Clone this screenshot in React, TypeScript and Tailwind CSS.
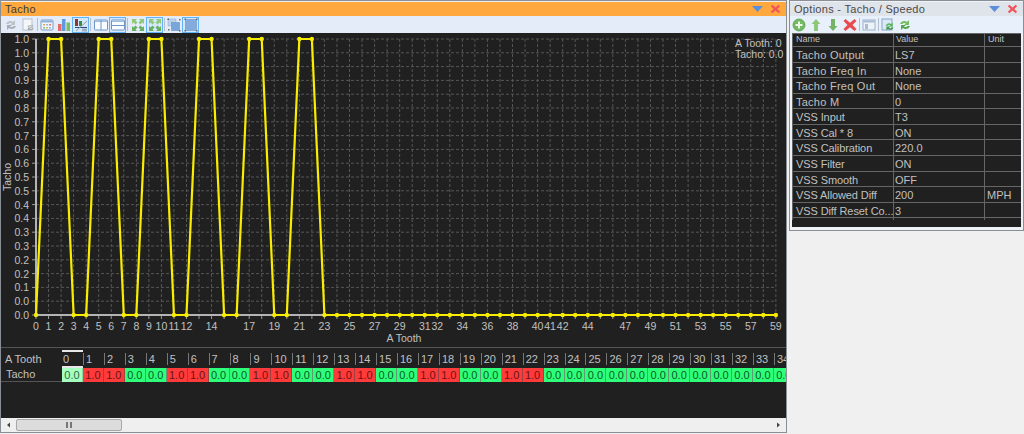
const FONT = "font-['Liberation_Sans',Arial,sans-serif]";

const values = Array.from({ length: 60 }, (_, i) => (i < 23 && [1, 2].includes(i % 4) ? 1 : 0));
const xLabels = [
  0, 1, 2, 3, 4, 5, 6, 7, 8, 9, 10, 11, 12, 14, 17, 19, 21, 23, 25, 27, 29, 31, 32, 34, 36, 38, 40, 41, 42, 44, 47, 49,
  51, 53, 55, 57, 59,
];
const yLabels = [
  "1.0", "1.0", "0.9", "0.9", "0.8", "0.8", "0.7", "0.7", "0.6", "0.6", "0.5", "0.5", "0.4", "0.4", "0.3", "0.3",
  "0.2", "0.2", "0.1", "0.0", "0.0",
];
const options = [
  ["Tacho Output", "LS7", ""],
  ["Tacho Freq In", "None", ""],
  ["Tacho Freq Out", "None", ""],
  ["Tacho M", "0", ""],
  ["VSS Input", "T3", ""],
  ["VSS Cal * 8", "ON", ""],
  ["VSS Calibration", "220.0", ""],
  ["VSS Filter", "ON", ""],
  ["VSS Smooth", "OFF", ""],
  ["VSS Allowed Diff", "200", "MPH"],
  ["VSS Diff Reset Co...", "3", ""],
];

const px = (i: number) => 36 + i * 12.54;
const py = (v: number) => 315 - v * 276;

function Chart() {
  const line = values.map((v, i) => `${px(i)},${py(v)}`).join(" ");
  return (
    <svg width="783" height="314" viewBox="1 33 783 314" className="block shrink-0">
      {yLabels.map((label, i) => {
        const y = 39 + i * 13.8;
        return (
          <g key={i}>
            <line x1="36" x2="776" y1={y} y2={y} stroke="#565656" strokeDasharray="3 2" />
            <line x1="32" x2="36" y1={y} y2={y} stroke="#9a9a9a" />
            <text x="29" y={y + 4} textAnchor="end" fontSize="10.5" fill="#c0c0c0">
              {label}
            </text>
          </g>
        );
      })}
      {values.map((_, i) => (
        <g key={i}>
          <line x1={px(i)} x2={px(i)} y1="39" y2="315" stroke="#565656" strokeDasharray="3 2" />
          <line x1={px(i)} x2={px(i)} y1="315" y2="319" stroke="#9a9a9a" />
        </g>
      ))}
      <line x1="36" x2="36" y1="39" y2="316" stroke="#b4b4b4" strokeWidth="2" />
      <line x1="35" x2="777" y1="315" y2="315" stroke="#b4b4b4" strokeWidth="2" />
      <polyline points={line} fill="none" stroke="#f8ec00" strokeWidth="2.2" />
      {values.map((v, i) => (
        <circle key={i} cx={px(i)} cy={py(v)} r="2.2" fill="#f8ec00" />
      ))}
      {xLabels.map((n) => (
        <text key={n} x={px(n)} y="330" textAnchor="middle" fontSize="10.5" fill="#c0c0c0">
          {n}
        </text>
      ))}
      <text x="404" y="342" textAnchor="middle" fontSize="10.5" fill="#c0c0c0">
        A Tooth
      </text>
      <text x="11" y="177" textAnchor="middle" fontSize="10.5" fill="#c0c0c0" transform="rotate(-90 11 177)">
        Tacho
      </text>
      <text x="735" y="47" fontSize="10.5" fill="#c0c0c0">
        A Tooth: 0
      </text>
      <text x="735" y="58" fontSize="10.5" fill="#c0c0c0">
        Tacho: 0.0
      </text>
    </svg>
  );
}

function ToolButton({ selected, children }: { selected?: boolean; children: React.ReactNode }) {
  return (
    <div
      className={
        selected
          ? "flex h-[16px] w-[17px] shrink-0 items-center justify-center border border-[#62b4f5] bg-[#d4e7fb]"
          : "flex h-[16px] w-[17px] shrink-0 items-center justify-center"
      }
    >
      <svg width="14" height="14" viewBox="0 0 14 14">
        {children}
      </svg>
    </div>
  );
}

function Sep({ wide }: { wide?: boolean }) {
  return (
    <div className={wide ? "mx-[1px] h-[13px] w-[1px] shrink-0 bg-[#b4bfce]" : "ml-[1px] h-[13px] w-[1px] shrink-0 bg-[#b4bfce]"} />
  );
}

const RecycleArrows = ({ c1, c2 }: { c1: string; c2: string }) => (
  <>
    <path d="M2 6 C3 3 7 2 9 4 L11 2 V7 H6 L8 5.5 C7 4.5 5 4.8 4.5 6 Z" fill={c1} />
    <path d="M12 8 C11 11 7 12 5 10 L3 12 V7 H8 L6 8.5 C7 9.5 9 9.2 9.5 8 Z" fill={c2} />
  </>
);

const FourArrows = () => (
  <>
    <path d="M1 1 H6 L4.5 2.5 L6.5 4.5 L4.5 6.5 L2.5 4.5 L1 6 Z" fill="#8fca7c" />
    <path d="M13 1 V6 L11.5 4.5 L9.5 6.5 L7.5 4.5 L9.5 2.5 L8 1 Z" fill="#8fca7c" />
    <path d="M1 13 V8 L2.5 9.5 L4.5 7.5 L6.5 9.5 L4.5 11.5 L6 13 Z" fill="#68ae62" />
    <path d="M13 13 H8 L9.5 11.5 L7.5 9.5 L9.5 7.5 L11.5 9.5 L13 8 Z" fill="#68ae62" />
  </>
);

function MainToolbar() {
  return (
    <div className="flex h-[17px] shrink-0 items-center bg-[#e4ecfa] pl-[1px]">
      <ToolButton>
        <RecycleArrows c1="#bcc2c8" c2="#a8aeb4" />
      </ToolButton>
      <ToolButton>
        <rect x="2" y="1" width="9" height="11" fill="#f4f6f8" stroke="#bcc2c8" />
        <g transform="translate(5 5) scale(0.65)">
          <RecycleArrows c1="#b4bac0" c2="#a0a6ac" />
        </g>
      </ToolButton>
      <Sep />
      <ToolButton>
        <rect x="1" y="2" width="12" height="10" rx="1" fill="#f2f6fb" stroke="#7b9cc4" />
        <rect x="1.5" y="2.5" width="11" height="2" fill="#8fb2dc" />
        <path d="M3 6h2v1.5H3z" fill="#e8a24a" />
        <path d="M6 6h2v1.5H6z" fill="#8cb8e4" />
        <path d="M9 6h2v1.5H9z" fill="#e07a7a" />
        <path d="M3 9h2v1.5H3z" fill="#8cc47a" />
        <path d="M6 9h2v1.5H6z" fill="#d8c060" />
        <path d="M9 9h2v1.5H9z" fill="#8cb8e4" />
      </ToolButton>
      <ToolButton>
        <rect x="1" y="6" width="3.5" height="7" fill="#e56a6a" />
        <rect x="5" y="1" width="3.5" height="12" fill="#5f9ade" />
        <rect x="9.5" y="4.5" width="3.5" height="8.5" fill="#7cbc60" />
      </ToolButton>
      <ToolButton selected>
        <rect x="1" y="1" width="3" height="7" fill="#8a3a2a" />
        <rect x="5" y="3" width="3" height="5" fill="#3a8a4a" />
        <path d="M1 9 H13 V10 H1 Z" fill="#2a4a8a" />
        <path d="M2 13 L13 3" stroke="#9a9a9a" />
        <rect x="8" y="10.5" width="5" height="3" fill="#a0b0c4" />
      </ToolButton>
      <Sep wide />
      <ToolButton>
        <rect x="0.5" y="2" width="13" height="10" rx="1" fill="#f8fbff" stroke="#6f97c6" />
        <rect x="1" y="2.5" width="12" height="1.5" fill="#9fbee2" />
        <line x1="7" x2="7" y1="2" y2="12" stroke="#6f97c6" />
      </ToolButton>
      <ToolButton selected>
        <rect x="0.5" y="2" width="13" height="10" rx="1" fill="#f8fbff" stroke="#6f97c6" />
        <rect x="1" y="2.5" width="12" height="1.5" fill="#9fbee2" />
        <line x1="0.5" x2="13.5" y1="7.5" y2="7.5" stroke="#6f97c6" />
      </ToolButton>
      <Sep wide />
      <ToolButton>
        <FourArrows />
      </ToolButton>
      <ToolButton selected>
        <FourArrows />
      </ToolButton>
      <Sep />
      <ToolButton>
        <rect x="1" y="1" width="8" height="7" fill="#bcd2ea" stroke="#86a6ca" strokeWidth="0.5" />
        <rect x="4.5" y="4.5" width="8" height="8" fill="#79a6da" stroke="#5f8cc0" strokeWidth="0.5" />
        <rect x="0.5" y="0.5" width="1.5" height="1.5" fill="#666" />
        <rect x="12" y="12" width="1.5" height="1.5" fill="#666" />
        <rect x="12" y="1" width="1.5" height="1.5" fill="#666" />
        <rect x="1" y="11" width="1.5" height="1.5" fill="#666" />
      </ToolButton>
      <ToolButton selected>
        <rect x="1.5" y="1.5" width="11" height="11" fill="#85abdc" stroke="#5f8cc0" strokeWidth="0.5" />
        <rect x="0.5" y="0.5" width="1.5" height="1.5" fill="#666" />
        <rect x="12" y="0.5" width="1.5" height="1.5" fill="#666" />
        <rect x="0.5" y="12" width="1.5" height="1.5" fill="#666" />
        <rect x="12" y="12" width="1.5" height="1.5" fill="#666" />
      </ToolButton>
    </div>
  );
}

function OptionsToolbar() {
  return (
    <div className="flex h-[17px] shrink-0 items-center bg-[#e8f0fb]">
      <ToolButton>
        <circle cx="7" cy="7" r="6" fill="#74ba62" stroke="#559e4e" strokeWidth="0.8" />
        <path d="M6 3.5h2V6h2.5v2H8v2.5H6V8H3.5V6H6z" fill="#eef8e8" />
      </ToolButton>
      <ToolButton>
        <path d="M7 1 L11.5 6 H9 V13 H5 V6 H2.5 Z" fill="#8cc878" />
      </ToolButton>
      <ToolButton>
        <path d="M7 13 L11.5 8 H9 V1 H5 V8 H2.5 Z" fill="#74b464" />
      </ToolButton>
      <ToolButton>
        <path d="M2.5 1 L7 4.8 L11.5 1 L13.5 3 L9.5 7 L13.5 11 L11.5 13 L7 9.2 L2.5 13 L0.5 11 L4.5 7 L0.5 3 Z" fill="#ea4a4e" />
      </ToolButton>
      <Sep />
      <ToolButton>
        <rect x="1" y="2" width="12" height="10" fill="#eef3fa" stroke="#9cb0c8" />
        <rect x="1.5" y="2.5" width="11" height="2" fill="#a8bcd4" />
        <rect x="3" y="6" width="3" height="5" fill="#a8bcd4" />
      </ToolButton>
      <Sep />
      <ToolButton>
        <rect x="1" y="1" width="10" height="11" fill="#dbe8f6" stroke="#86a6ca" />
        <g transform="translate(3 3) scale(0.8)">
          <RecycleArrows c1="#5cb45c" c2="#449a4c" />
        </g>
      </ToolButton>
      <ToolButton>
        <RecycleArrows c1="#74bd60" c2="#56a650" />
      </ToolButton>
    </div>
  );
}

function TitleBar({ title, bg, text }: { title: string; bg: string; text: string }) {
  return (
    <div className={`flex h-[14px] shrink-0 items-center justify-between pl-[4px] pr-[5px] text-[11px] tracking-[0.3px] ${bg} ${text}`}>
      <span>{title}</span>
      <div className="flex items-center gap-[7px]">
        <svg width="11" height="6" viewBox="0 0 11 6">
          <path d="M0 0H11L5.5 6Z" fill="#5b8fd8" />
        </svg>
        <svg width="11" height="10" viewBox="0 0 14 14">
          <path d="M2.5 1 L7 4.8 L11.5 1 L13.5 3 L9.5 7 L13.5 11 L11.5 13 L7 9.2 L2.5 13 L0.5 11 L4.5 7 L0.5 3 Z" fill="#f0555a" />
        </svg>
      </div>
    </div>
  );
}

function DataGrid() {
  return (
    <div className="flex h-[69px] shrink-0 text-[11px] text-[#c0c0c0]">
      <div className="w-[61px] shrink-0">
        <div className="flex h-[18px] items-center pl-[4px]">A Tooth</div>
        <div className="flex h-[14px] items-center border-b border-[#555] pl-[5px]">Tacho</div>
      </div>
      <div className="flex min-w-0 flex-1 overflow-hidden">
        {values.slice(0, 35).map((v, i) => (
          <div key={i} className="w-[20.95px] shrink-0">
            {i === 0 ? (
              <div className="flex h-[18px] items-center border-y-2 border-[#e8e8e8] pl-[1px]">
                <span>0</span>
              </div>
            ) : (
              <div className="flex h-[18px] items-center">
                <span className="border-l border-[#777] pl-[2px] leading-[12px]">{i}</span>
              </div>
            )}
            <div
              className={
                i === 0
                  ? "flex h-[14px] items-center justify-center border-r border-[#8ad8a0] bg-[#a6ffbe] text-[#2a6a40]"
                  : v
                    ? "flex h-[14px] items-center justify-center border-r border-[#a04040] bg-[#ff3a3a] text-[#6a1414]"
                    : "flex h-[14px] items-center justify-center border-r border-[#5f9a72] bg-[#2eff78] text-[#0a5a2a]"
              }
            >
              {v ? "1.0" : "0.0"}
            </div>
          </div>
        ))}
      </div>
    </div>
  );
}

function ScrollBar() {
  return (
    <div className="flex h-[14px] shrink-0 items-center justify-between bg-[#efefef]">
      <div className="flex items-center">
        <svg width="15" height="14" viewBox="0 0 15 14">
          <path d="M6 7 L9 4.5 V9.5 Z" fill="#444" />
        </svg>
        <div className="flex h-[12px] w-[106px] items-center justify-center rounded-[2px] border border-[#a8a8a8] bg-[#dcdcdc]">
          <div className="h-[6px] w-[6px] border-x-2 border-[#777]" />
        </div>
      </div>
      <svg width="14" height="14" viewBox="0 0 14 14">
        <path d="M8 7 L5 4.5 V9.5 Z" fill="#444" />
      </svg>
    </div>
  );
}

function OptionsTable() {
  return (
    <div className="mx-[2px] h-[194px] bg-[#202020] text-[11px] text-[#c0c0c0]">
      <div className="grid h-[14px] grid-cols-[102px_91px_1fr] border-y border-[#666] text-[9px] leading-[11px]">
        <div className="border-x border-[#666] pl-[3px]">Name</div>
        <div className="border-r border-[#666] pl-[2px]">Value</div>
        <div className="pl-[3px]">Unit</div>
      </div>
      {options.map(([name, value, unit]) => (
        <div key={name} className="grid h-[15.57px] grid-cols-[102px_91px_1fr] border-b border-[#666] leading-[17px]">
          <div
            className={
              name.startsWith("VSS")
                ? "whitespace-nowrap border-x border-[#666] pl-[3px] tracking-[-0.1px]"
                : "whitespace-nowrap border-x border-[#666] pl-[3px] tracking-[0.25px]"
            }
          >
            {name}
          </div>
          <div className="border-r border-[#666] pl-[1px]">{value}</div>
          <div className="pl-[2px]">{unit}</div>
        </div>
      ))}
    </div>
  );
}

export default function App() {
  return (
    <div className={`flex h-[434px] w-[1024px] items-start justify-between overflow-hidden bg-[#f0f0f0] ${FONT}`}>
      <div className="flex h-[433px] w-[787px] shrink-0 flex-col border border-[#8a8f96] pt-[1px]">
        <TitleBar title="Tacho" bg="bg-[#ffa83e]" text="text-[#3a3a3a]" />
        <MainToolbar />
        <div className="flex min-h-0 flex-1 flex-col bg-[#202020]">
          <Chart />
          <div className="h-[1px] shrink-0 bg-[#555]" />
          <div className="h-[2px] shrink-0" />
          <DataGrid />
          <div className="flex-1" />
        </div>
        <ScrollBar />
      </div>
      <div className="flex h-[231px] w-[235px] shrink-0 flex-col border border-[#8a8f96] bg-[#eef1f6] pt-[1px]">
        <TitleBar title="Options - Tacho / Speedo" bg="bg-[#dfe3ea]" text="text-[#4a4a4a]" />
        <OptionsToolbar />
        <OptionsTable />
      </div>
    </div>
  );
}
